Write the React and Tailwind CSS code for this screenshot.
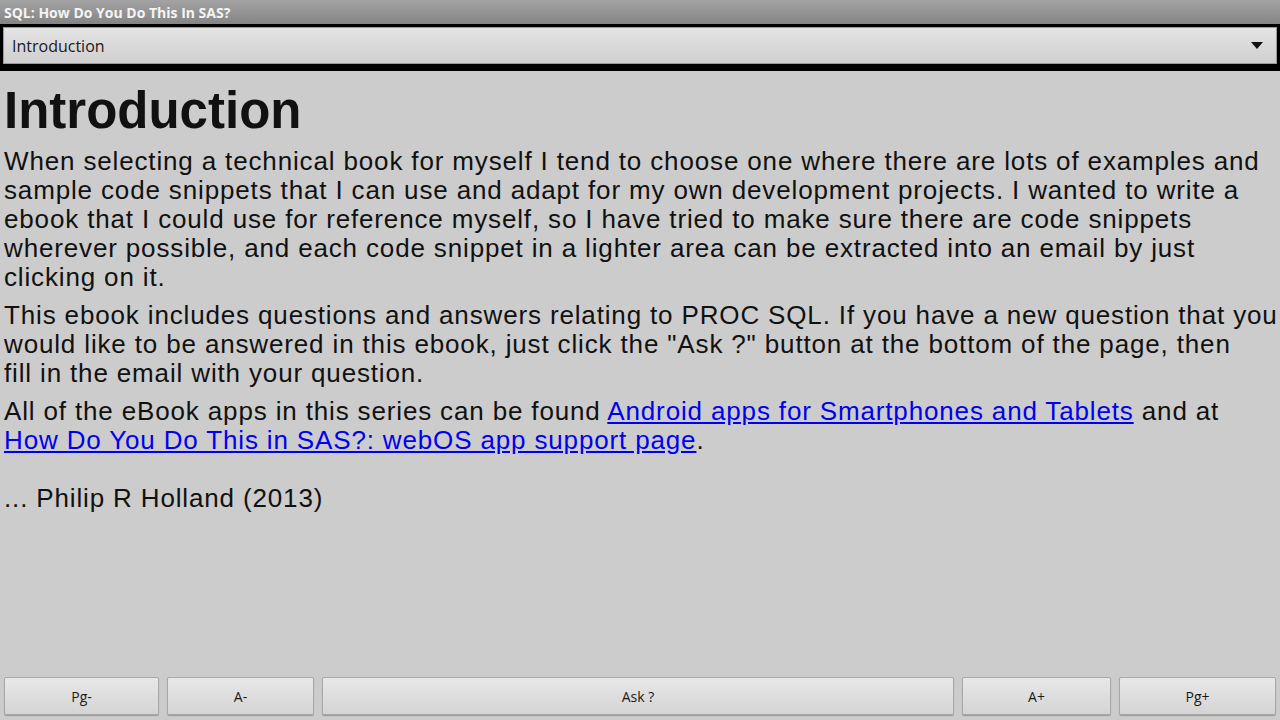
import React from "react";

const buttons = [
  { label: "Pg-", w: "w-[155px]" },
  { label: "A-", w: "w-[147px]" },
  { label: "Ask ?", w: "flex-1" },
  { label: "A+", w: "w-[149px]" },
  { label: "Pg+", w: "w-[157px]" },
];

const App = () => {
  return (
    <div className="flex h-screen w-full flex-col overflow-hidden bg-[#cccccc]">
      {/* title bar */}
      <div className="flex h-[24px] items-center bg-gradient-to-b from-[#a3a3a3] to-[#858585] px-[4px]">
        <span className="font-['Open_Sans',sans-serif] text-[14px] font-bold text-[#f4f4f4]">
          SQL: How Do You Do This In SAS?
        </span>
      </div>

      {/* chapter select */}
      <div className="bg-black px-[3px] pt-[3px] pb-[7px]">
        <div className="flex h-[37px] items-center justify-between border border-[#9a9a9a] bg-gradient-to-b from-[#e4e4e4] to-[#cfcfcf] pl-[8px] pr-[13px]">
          <span className="font-['Open_Sans',sans-serif] text-[16px] text-[#1a1a1a]">
            Introduction
          </span>
          <svg width="12" height="7" viewBox="0 0 12 7">
            <path d="M0 0H12L6 7Z" fill="#111" />
          </svg>
        </div>
      </div>

      {/* page content */}
      <div className="flex-1 pl-[4px] pr-[1px] font-['Liberation_Sans',Arial,sans-serif] text-[26px] leading-[29px] tracking-[0.85px] text-[#111]">
        <h1 className="mt-[11px] mb-[7px] text-[51px] leading-[58px] font-bold tracking-normal">
          Introduction
        </h1>
        <p className="mb-[9px]">
          When selecting a technical book for myself I tend to choose one where
          there are lots of examples and
          <br />
          sample code snippets that I can use and adapt for my own development
          projects. I wanted to write a
          <br />
          ebook that I could use for reference myself, so I have tried to make
          sure there are code snippets
          <br />
          wherever possible, and each code snippet in a lighter area can be
          extracted into an email by just
          <br />
          clicking on it.
        </p>
        <p className="mb-[9px]">
          This ebook includes questions and answers relating to PROC SQL. If you
          have a new question that you
          <br />
          would like to be answered in this ebook, just click the "Ask ?" button
          at the bottom of the page, then
          <br />
          fill in the email with your question.
        </p>
        <p>
          All of the eBook apps in this series can be found{" "}
          <a href="#" className="text-[#0000ee] underline">
            Android apps for Smartphones and Tablets
          </a>{" "}
          and at
          <br />
          <a href="#" className="text-[#0000ee] underline">
            How Do You Do This in SAS?: webOS app support page
          </a>
          .
          <br />
          <br />
          ... Philip R Holland (2013)
        </p>
      </div>

      {/* bottom buttons */}
      <div className="flex gap-[8px] px-[4px] pb-[5px]">
        {buttons.map((b) => (
          <button
            key={b.label}
            className={`${b.w} h-[38px] rounded-[2px] border border-[#a8a8a8] bg-gradient-to-b from-[#e8e8e8] to-[#d4d4d4] font-['Open_Sans',sans-serif] text-[14px] text-[#1a1a1a] shadow-[0_1px_1px_rgba(0,0,0,0.25)]`}
          >
            {b.label}
          </button>
        ))}
      </div>
    </div>
  );
};

export default App;
